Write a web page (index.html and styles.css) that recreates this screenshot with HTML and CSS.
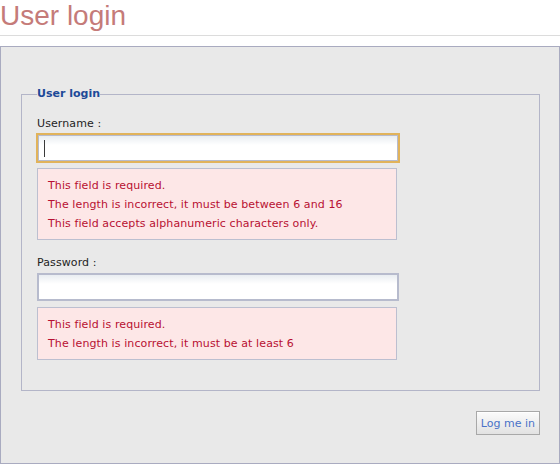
FILE: index.html
```html
<!DOCTYPE html>
<html lang="en">
<head>
<meta charset="utf-8">
<title>User login</title>
<link rel="stylesheet" href="styles.css">
</head>
<body>
<header class="page-head">
  <h1 class="title">User login</h1>
</header>
<div class="panel">
  <form class="login-form" onsubmit="return false">
    <fieldset class="fs">
      <legend class="legend">User login</legend>
      <div class="field">
        <label class="label" for="username">Username :</label>
        <div class="input-wrap">
          <input class="input input-focus" id="username" type="text">
          <span class="caret"></span>
        </div>
        <ul class="errors">
          <li>This field is required.</li>
          <li>The length is incorrect, it must be between 6 and 16</li>
          <li>This field accepts alphanumeric characters only.</li>
        </ul>
      </div>
      <div class="field field-next">
        <label class="label" for="password">Password :</label>
        <div class="input-wrap">
          <input class="input" id="password" type="password">
        </div>
        <ul class="errors">
          <li>This field is required.</li>
          <li>The length is incorrect, it must be at least 6</li>
        </ul>
      </div>
    </fieldset>
    <div class="actions">
      <button class="btn" type="submit">Log me in</button>
    </div>
  </form>
</div>
</body>
</html>
```
FILE: styles.css
```css
html, body {
  margin: 0;
  padding: 0;
  background: #ffffff;
  overflow: hidden;
}

body {
  font-family: "DejaVu Sans", Verdana, sans-serif;
  font-size: 11px;
  color: #222222;
}

.page-head {
  border-bottom: 1px solid #dcdcdc;
  padding-bottom: 3px;
}

.title {
  margin: 0;
  font-family: "Liberation Sans", Arial, sans-serif;
  font-size: 28px;
  line-height: 32px;
  font-weight: normal;
  color: #c57b79;
}

.panel {
  margin-top: 10px;
  height: 418px;
  box-sizing: border-box;
  background: #e9e9e9;
  border: 1px solid #a9abc0;
  padding: 40px 19px 0 20px;
}

.login-form {
  margin: 0;
}

.fs {
  margin: 0;
  border: 1px solid #b3b5c8;
  padding: 15px 15px 30px 15px;
}

.legend {
  padding: 0;
  font-weight: bold;
  font-size: 11px;
  line-height: 14px;
  color: #1d4a98;
}

.field-next {
  margin-top: 15px;
}

.label {
  display: block;
  height: 16px;
  line-height: 16px;
  margin-bottom: 2px;
  letter-spacing: 0.1px;
  color: #1e1e1e;
}

.input-wrap {
  position: relative;
  width: 362px;
}

.input {
  display: block;
  box-sizing: border-box;
  width: 362px;
  height: 28px;
  margin: 0;
  padding: 0 5px;
  border: 2px solid #b7bbcd;
  background: linear-gradient(#e9edf1, #ffffff 9px);
  font-family: "DejaVu Sans", Verdana, sans-serif;
  font-size: 12px;
  outline: none;
}

.input-focus {
  outline: 2px solid #e1b35b;
  outline-offset: -1px;
}

.caret {
  position: absolute;
  left: 7px;
  top: 6px;
  width: 1px;
  height: 17px;
  background: #3a3a3a;
}

.errors {
  list-style: none;
  margin: 6px 0 0 0;
  width: 360px;
  box-sizing: border-box;
  padding: 7px 10px 6px 10px;
  border: 1px solid #bcbfd0;
  background: #fde7e7;
  color: #b81032;
  line-height: 19px;
  letter-spacing: 0.1px;
}

.errors li {
  margin: 0;
  padding: 0;
  white-space: nowrap;
}

.actions {
  display: flex;
  justify-content: flex-end;
  margin-top: 20px;
}

.btn {
  box-sizing: border-box;
  height: 24px;
  padding: 0 4px;
  border: 1px solid #a8a8a8;
  background: linear-gradient(#fbfbfb, #e2e2e2);
  box-shadow: inset 0 1px 0 #ffffff;
  color: #4a72c8;
  font-family: "DejaVu Sans", Verdana, sans-serif;
  font-size: 11px;
  cursor: pointer;
}
```
